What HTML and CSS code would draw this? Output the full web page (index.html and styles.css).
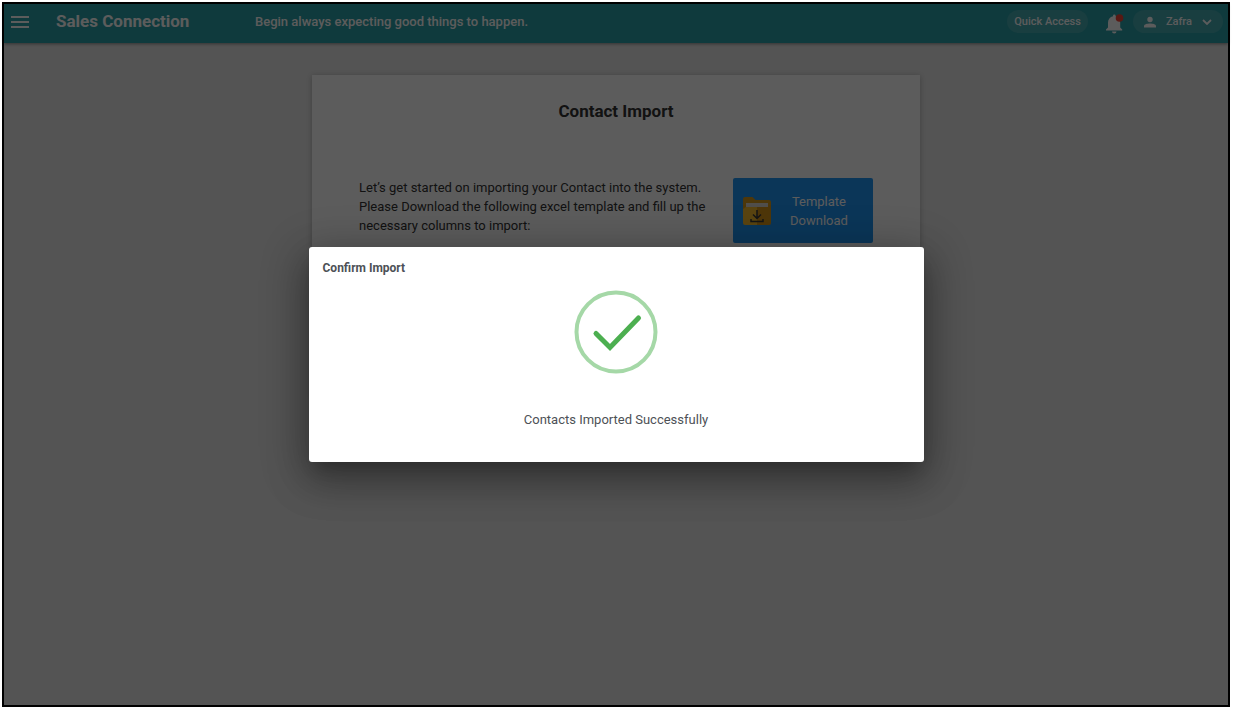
FILE: index.html
```html
<!DOCTYPE html>
<html lang="en">
<head>
<meta charset="utf-8">
<title>Contact Import</title>
<link rel="stylesheet" href="styles.css">
</head>
<body>
<div class="frame">
  <header class="topbar">
    <button class="menu" type="button" aria-label="Menu">
      <svg width="18" height="14" viewBox="0 0 18 14"><path d="M0 2h18M0 7h18M0 12h18" stroke="currentColor" stroke-width="2"/></svg>
    </button>
    <span class="brand">Sales Connection</span>
    <span class="quote">Begin always expecting good things to happen.</span>
    <div class="actions">
      <button class="pill" type="button">Quick Access</button>
      <button class="bell" type="button" aria-label="Notifications">
        <svg width="18" height="20" viewBox="0 0 18 20"><path d="M6 17.500h4.500a2.250 2 0 0 1-4.500 0zM0 16.500v-1l2-2V8.500C2 5.300 4 3 7 2.300V1.700a1.300 1.300 0 0 1 2.600 0v.6C12.500 3 14.200 5.300 14.200 8.500v5l2 2v1z" fill="currentColor"/><circle cx="13.500" cy="4" r="3.800" fill="#f44336"/></svg>
      </button>
      <button class="pill user" type="button">
        <svg width="12" height="12" viewBox="0 0 12 12"><circle cx="6" cy="3.500" r="2.700" fill="currentColor"/><path d="M0 11.500V10C0 8.200 3.500 7.500 6 7.500s6 .7 6 2.500v1.500z" fill="currentColor"/></svg>
        <span>Zafra</span>
        <svg width="10" height="6" viewBox="0 0 10 6"><path d="M1 1l4 4 4-4" fill="none" stroke="currentColor" stroke-width="1.800"/></svg>
      </button>
    </div>
  </header>
  <main class="page">
    <section class="card">
      <h1>Contact Import</h1>
      <div class="intro">
        <p>Let’s get started on importing your Contact into the system. Please Download the following excel template and fill up the necessary columns to import:</p>
        <button class="download" type="button">
          <svg width="28" height="28" viewBox="0 0 28 28"><path d="M0 2a2 2 0 0 1 2-2h7.500l3 3H26a2 2 0 0 1 2 2v10H0z" fill="#d69a1e"/><path d="M3 6h22v4H3z" fill="#ded9d0"/><path d="M0 12l3-2h11v18H2a2 2 0 0 1-2-2z" fill="#f5bd2f"/><path d="M14 10h11l3-2v18a2 2 0 0 1-2 2H14z" fill="#d9951b"/><path d="M14 13v8M10 17.500l4 4 4-4M8 22v2.500h12V22" fill="none" stroke="#3b3b3b" stroke-width="1.500"/></svg>
          <span>Template<br>Download</span>
        </button>
      </div>
    </section>
  </main>
  <div class="backdrop">
    <div class="dialog" role="dialog" aria-modal="true" aria-labelledby="dialog-title">
      <h2 id="dialog-title">Confirm Import</h2>
      <svg class="success" width="84" height="84" viewBox="0 0 84 84" fill="none"><circle cx="42" cy="42" r="39.500" stroke="#a5d8a7" stroke-width="4"/><path d="M22 43.500L36 57.500L64.500 28" stroke="#4caf50" stroke-width="5" stroke-linecap="round"/></svg>
      <p>Contacts Imported Successfully</p>
    </div>
  </div>
</div>
</body>
</html>
```
FILE: styles.css
```css
* { box-sizing: border-box; }
body {
  margin: 0;
  padding: 2px 4px 4px 2px;
  min-height: 100vh;
  display: flex;
  background: #fff;
  font-family: Roboto, "Liberation Sans", sans-serif;
  font-size: 13px;
  line-height: 19px;
}
h1, h2, p { margin: 0; }
button {
  border: 0;
  padding: 0;
  background: none;
  color: inherit;
  font: inherit;
}
svg { display: block; flex: none; }
.frame {
  position: relative;
  flex: 1;
  display: flex;
  flex-direction: column;
  border: 2px solid #000;
  background: #e9e9e9;
}
.topbar {
  display: flex;
  align-items: center;
  height: 39px;
  padding: 0 5px 4px 7px;
  background: #2ca0a8;
  color: #fff;
  box-shadow: 0 1px 3px rgba(0, 0, 0, 0.4);
}
.menu { width: 45px; }
.brand {
  width: 199px;
  font-size: 17px;
  font-weight: 700;
}
.quote { font-weight: 500; font-size: 13px; }
.actions {
  display: flex;
  align-items: center;
  margin-left: auto;
}
.pill {
  display: flex;
  align-items: center;
  height: 23px;
  padding: 0 7px;
  border-radius: 12px;
  background: rgba(255, 255, 255, 0.12);
  font-size: 11px;
  font-weight: 500;
}
.bell { margin: 4px 9px 0 18px; }
.user { gap: 10px; padding: 0 11px; }
.page {
  display: flex;
  justify-content: center;
  padding: 32px;
}
.card {
  width: 608px;
  height: 320px;
  padding: 27px 47px;
  background: #fff;
  color: #333;
  box-shadow: 0 1px 6px rgba(0, 0, 0, 0.25);
}
.card h1 {
  font-size: 17px;
  font-weight: 700;
  line-height: 19px;
  text-align: center;
}
.intro {
  display: flex;
  justify-content: space-between;
  margin-top: 57px;
}
.intro p { width: 356px; }
.download {
  display: flex;
  align-items: center;
  gap: 19px;
  width: 140px;
  height: 65px;
  padding: 0 10px;
  border-radius: 2px;
  background: #2196f3;
  color: #fff;
}
.backdrop {
  position: absolute;
  inset: 0;
  display: flex;
  align-items: center;
  justify-content: center;
  background: rgba(0, 0, 0, 0.64);
}
.dialog {
  display: flex;
  flex-direction: column;
  align-items: center;
  width: 615px;
  padding: 12px 14px 33px;
  border-radius: 3px;
  background: #fff;
  color: #4d5156;
  box-shadow: 0 11px 15px -7px rgba(0, 0, 0, 0.2), 0 16px 38px 3px rgba(0, 0, 0, 0.28), 0 9px 46px 8px rgba(0, 0, 0, 0.16);
}
.dialog h2 {
  align-self: flex-start;
  font-size: 12px;
  font-weight: 700;
  line-height: 19px;
}
.success { margin: 12px 0 36px; }
```
